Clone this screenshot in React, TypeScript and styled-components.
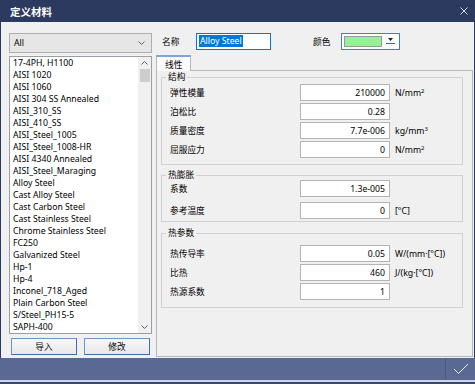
import styled, { createGlobalStyle } from "styled-components";

const GlobalStyle = createGlobalStyle`
  html, body { margin: 0; padding: 0; }
  body {
    font-family: "Noto Sans", "Noto Sans CJK SC", sans-serif;
    font-size: 8.7px;
    color: #000;
    background: #fff;
  }
  * { box-sizing: border-box; }
`;

const materials = [
  "17-4PH, H1100",
  "AISI 1020",
  "AISI 1060",
  "AISI 304 SS Annealed",
  "AISI_310_SS",
  "AISI_410_SS",
  "AISI_Steel_1005",
  "AISI_Steel_1008-HR",
  "AISI 4340 Annealed",
  "AISI_Steel_Maraging",
  "Alloy Steel",
  "Cast Alloy Steel",
  "Cast Carbon Steel",
  "Cast Stainless Steel",
  "Chrome Stainless Steel",
  "FC250",
  "Galvanized Steel",
  "Hp-1",
  "Hp-4",
  "Inconel_718_Aged",
  "Plain Carbon Steel",
  "S/Steel_PH15-5",
  "SAPH-400",
];

type Field = { label: string; value: string; unit?: React.ReactNode };

const groups: { title: string; top: number; padTop: number; padBottom: number; gap: number; fields: Field[] }[] = [
  {
    title: "结构",
    top: 1,
    padTop: 2,
    padBottom: 6,
    gap: 2,
    fields: [
      { label: "弹性模量", value: "210000", unit: <>N/mm<sup>2</sup></> },
      { label: "泊松比", value: "0.28" },
      { label: "质量密度", value: "7.7e-006", unit: <>kg/mm<sup>3</sup></> },
      { label: "屈服应力", value: "0", unit: <>N/mm<sup>2</sup></> },
    ],
  },
  {
    title: "热膨胀",
    top: 5,
    padTop: 0,
    padBottom: 2,
    gap: 5,
    fields: [
      { label: "系数", value: "1.3e-005" },
      { label: "参考温度", value: "0", unit: "[°C]" },
    ],
  },
  {
    title: "热参数",
    top: 6,
    padTop: 7,
    padBottom: 7,
    gap: 2,
    fields: [
      { label: "热传导率", value: "0.05", unit: "W/(mm·[°C])" },
      { label: "比热", value: "460", unit: "J/(kg·[°C])" },
      { label: "热源系数", value: "1" },
    ],
  },
];

const Frame = styled.div`
  width: 475px;
  height: 384px;
  display: flex;
  flex-direction: column;
  background: #f0f0f0;
  overflow: hidden;
`;

const TitleBar = styled.div`
  height: 22px;
  flex: none;
  background: #2b3a5e;
  color: #fff;
  display: flex;
  align-items: center;
  justify-content: space-between;
  padding: 0 7px 0 10px;
  font-size: 10.5px;
  font-weight: bold;
`;

const Body = styled.div`
  height: 336px;
  flex: none;
  display: flex;
  border-left: 1px solid #2b3a5e;
  border-right: 1px solid #2b3a5e;
`;

const LeftCol = styled.div`
  width: 143px;
  margin-left: 8px;
  padding-top: 11px;
  display: flex;
  flex-direction: column;
`;

const Select = styled.div`
  height: 20px;
  border: 1px solid #adadad;
  background: #e6e6e6;
  display: flex;
  align-items: center;
  justify-content: space-between;
  padding: 0 6px 0 4px;
`;

const ListBox = styled.div`
  height: 278px;
  margin-top: 3px;
  border: 1px solid #9a9ea6;
  background: #fff;
  display: flex;
`;

const Items = styled.div`
  flex: 1;
  padding-left: 3px;
  overflow: hidden;
`;

const Item = styled.div`
  height: 12px;
  line-height: 12px;
  white-space: nowrap;
`;

const ScrollBar = styled.div`
  width: 13px;
  background: #f0f0f0;
  display: flex;
  flex-direction: column;
  align-items: center;
`;

const ScrollArrow = styled.div`
  height: 12px;
  width: 100%;
  display: flex;
  align-items: center;
  justify-content: center;
`;

const Thumb = styled.div`
  width: 10px;
  height: 13px;
  background: #cdcdcd;
`;

const Track = styled.div`
  flex: 1;
`;

const ButtonRow = styled.div`
  margin-top: 4px;
  height: 17px;
  padding: 0 2px;
  display: grid;
  grid-template-columns: 1fr 1fr;
  gap: 7px;
`;

const Button = styled.div`
  border: 1px solid #6f93c9;
  border-right-color: #3f6db3;
  border-bottom-color: #3f6db3;
  background: linear-gradient(#f7f7f7, #e8e8e8);
  display: flex;
  align-items: center;
  justify-content: center;
`;

const RightCol = styled.div`
  flex: 1;
  margin-left: 4px;
  margin-right: 1px;
  display: flex;
  flex-direction: column;
`;

const Header = styled.div`
  height: 18px;
  margin-top: 10px;
  padding-left: 6px;
  display: flex;
  align-items: center;
`;

const HeadLabel = styled.span<{ $w: number; $ml?: number }>`
  width: ${(p) => p.$w}px;
  margin-left: ${(p) => p.$ml ?? 0}px;
`;

const NameInput = styled.div`
  width: 75px;
  height: 17px;
  border: 1px solid #0078d7;
  background: #fff;
  display: flex;
  align-items: center;
  padding-left: 2px;
`;

const Selected = styled.span`
  background: #0078d7;
  color: #fff;
  padding: 0 1px;
  line-height: 12px;
`;

const ColorPicker = styled.div`
  width: 59px;
  height: 17px;
  border: 1px solid #3b7fd1;
  background: #fff;
  display: flex;
  align-items: stretch;
  padding: 2px;
  gap: 2px;
`;

const Swatch = styled.div`
  flex: 1;
  background: #96f096;
  border: 1px solid #9a9a9a;
`;

const DropButton = styled.div`
  width: 13px;
  display: flex;
  flex-direction: column;
  align-items: center;
  justify-content: center;
  gap: 2px;
`;

const DropLine = styled.div`
  width: 9px;
  height: 1px;
  background: #0078d7;
`;

const TabStrip = styled.div`
  margin-top: 5px;
  height: 15px;
  display: flex;
`;

const Tab = styled.div`
  padding: 0 8px;
  background: #fbfbfb;
  border: 1px solid #b8b8b8;
  border-top: 2px solid #7aa6df;
  border-bottom: none;
  margin-bottom: -1px;
  position: relative;
  z-index: 1;
  display: flex;
  align-items: center;
`;

const Panel = styled.div`
  height: 287px;
  border: 1px solid #b8b8b8;
  background: #f0f0f0;
  padding: 0 9px 0 4px;
`;

const Group = styled.fieldset<{ $top: number; $pt: number; $pb: number; $gap: number }>`
  margin: ${(p) => p.$top}px 0 0 0;
  padding: ${(p) => p.$pt}px 0 ${(p) => p.$pb}px 8px;
  border: 1px solid #d0d0d0;
  min-width: 0;
  display: flex;
  flex-direction: column;
  gap: ${(p) => p.$gap}px;
`;

const Legend = styled.legend`
  line-height: 10px;
  padding: 0 2px;
  margin-left: -4px;
`;

const Row = styled.div`
  height: 17px;
  display: flex;
  align-items: center;
`;

const RowLabel = styled.span`
  width: 130px;
`;

const ValueBox = styled.div`
  width: 90px;
  height: 17px;
  border: 1px solid #b4b4b4;
  background: #fff;
  display: flex;
  align-items: center;
  justify-content: flex-end;
  padding-right: 4px;
`;

const Unit = styled.span`
  margin-left: 5px;
  sup {
    font-size: 6px;
    vertical-align: 3px;
  }
`;

const BottomBar = styled.div`
  height: 26px;
  flex: none;
  background: #5a6994;
  border-bottom: 2px solid #3a4870;
  box-shadow: inset 0 -2px 0 #cfd5e2;
  display: flex;
  justify-content: flex-end;
`;

const CheckCell = styled.div`
  width: 30px;
  height: 22px;
  border-left: 1px solid #4c5a83;
  display: flex;
  align-items: center;
  justify-content: center;
`;

const Chevron = ({ up }: { up?: boolean }) => (
  <svg width="7" height="4" viewBox="0 0 7 4">
    <polyline
      points={up ? "0.5,3.5 3.5,0.5 6.5,3.5" : "0.5,0.5 3.5,3.5 6.5,0.5"}
      fill="none"
      stroke="#606060"
      strokeWidth="1"
    />
  </svg>
);

export default function App() {
  return (
    <>
      <GlobalStyle />
      <Frame>
        <TitleBar>
          <span>定义材料</span>
          <svg width="8" height="8" viewBox="0 0 8 8">
            <path d="M0.5 0.5 L7.5 7.5 M7.5 0.5 L0.5 7.5" stroke="#d6dae3" strokeWidth="1" />
          </svg>
        </TitleBar>
        <Body>
          <LeftCol>
            <Select>
              <span>All</span>
              <Chevron />
            </Select>
            <ListBox>
              <Items>
                {materials.map((m) => (
                  <Item key={m}>{m}</Item>
                ))}
              </Items>
              <ScrollBar>
                <ScrollArrow>
                  <Chevron up />
                </ScrollArrow>
                <Thumb />
                <Track />
                <ScrollArrow>
                  <Chevron />
                </ScrollArrow>
              </ScrollBar>
            </ListBox>
            <ButtonRow>
              <Button>导入</Button>
              <Button>修改</Button>
            </ButtonRow>
          </LeftCol>
          <RightCol>
            <Header>
              <HeadLabel $w={34}>名称</HeadLabel>
              <NameInput>
                <Selected>Alloy Steel</Selected>
              </NameInput>
              <HeadLabel $w={28} $ml={42}>
                颜色
              </HeadLabel>
              <ColorPicker>
                <Swatch />
                <DropButton>
                  <svg width="5" height="3" viewBox="0 0 5 3">
                    <polygon points="0,0 5,0 2.5,3" fill="#222" />
                  </svg>
                  <DropLine />
                </DropButton>
              </ColorPicker>
            </Header>
            <TabStrip>
              <Tab>线性</Tab>
            </TabStrip>
            <Panel>
              {groups.map((g) => (
                <Group key={g.title} $top={g.top} $pt={g.padTop} $pb={g.padBottom} $gap={g.gap}>
                  <Legend>{g.title}</Legend>
                  {g.fields.map((f) => (
                    <Row key={f.label}>
                      <RowLabel>{f.label}</RowLabel>
                      <ValueBox>{f.value}</ValueBox>
                      {f.unit && <Unit>{f.unit}</Unit>}
                    </Row>
                  ))}
                </Group>
              ))}
            </Panel>
          </RightCol>
        </Body>
        <BottomBar>
          <CheckCell>
            <svg width="16" height="12" viewBox="0 0 16 12">
              <polyline points="1,6 5.5,10.5 15,1" fill="none" stroke="#e8ebf2" strokeWidth="1" />
            </svg>
          </CheckCell>
        </BottomBar>
      </Frame>
    </>
  );
}
